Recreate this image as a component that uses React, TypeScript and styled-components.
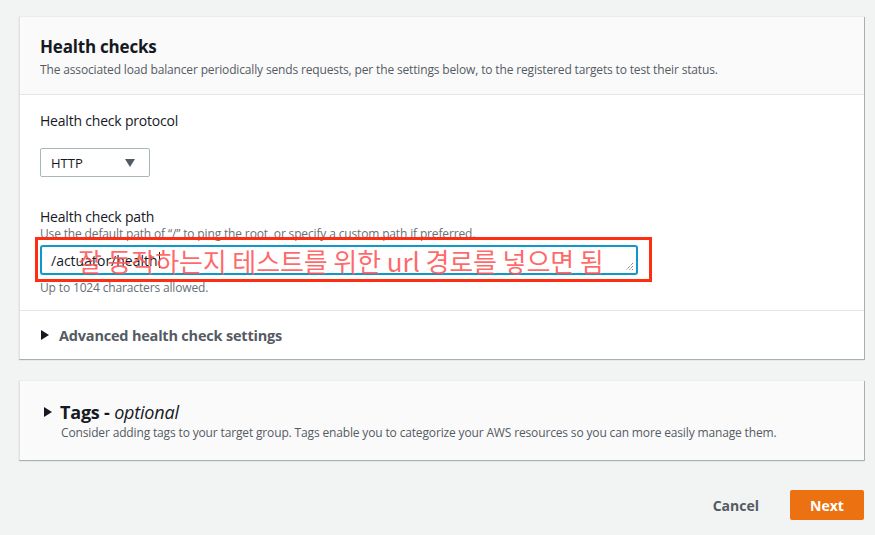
import React from "react";
import styled, { createGlobalStyle } from "styled-components";

const Global = createGlobalStyle`
  html, body { margin: 0; padding: 0; }
  body {
    background: #f2f3f3;
    font-family: "Open Sans", "Noto Sans", sans-serif;
    color: #16191f;
    width: 875px;
    height: 535px;
    overflow: hidden;
  }
`;

const Page = styled.div`
  padding: 16px 11px 0 19px;
  display: flex;
  flex-direction: column;
`;

const Card = styled.section<{ $tinted?: boolean }>`
  background: ${(p) => (p.$tinted ? "#fafafa" : "#ffffff")};
  border-top: 1px solid #eaeded;
  border-left: 1px solid #e1e4e4;
  box-shadow: 1px 1px 0 0 #a9b0b4, 0 1px 1px 0 rgba(0, 28, 36, 0.25);
  display: flex;
  flex-direction: column;
`;

const CardHeader = styled.header`
  background: #fafafa;
  border-bottom: 1px solid #e4e7e7;
  padding: 19px 20px 0;
  height: 78px;
  box-sizing: border-box;
`;

const Title = styled.h2`
  margin: 0;
  font-size: 17px;
  line-height: 22px;
  font-weight: 700;
  color: #16191f;
  letter-spacing: -0.2px;
`;

const Desc = styled.p`
  margin: 4px 0 0;
  font-size: 12px;
  line-height: 16px;
  color: #545b64;
  letter-spacing: -0.15px;
`;

const CardBody = styled.div`
  padding: 16px 20px 0;
  display: flex;
  flex-direction: column;
`;

const Field = styled.div<{ $mt?: number }>`
  display: flex;
  flex-direction: column;
  margin-top: ${(p) => p.$mt ?? 0}px;
`;

const Label = styled.label`
  font-size: 14px;
  line-height: 20px;
  color: #16191f;
  letter-spacing: -0.2px;
`;

const Hint = styled.div<{ $mt?: number }>`
  font-size: 12px;
  line-height: 14px;
  color: #687078;
  margin-top: ${(p) => p.$mt ?? 0}px;
  letter-spacing: -0.15px;
`;

const Select = styled.div`
  margin-top: 17px;
  width: 110px;
  height: 29px;
  box-sizing: border-box;
  border: 1px solid #aab7b8;
  border-radius: 2px;
  display: flex;
  align-items: center;
  justify-content: space-between;
  padding: 0 14px 0 10px;
  font-size: 13px;
  color: #16191f;
  background: #fff;
`;

const Caret = styled.span`
  width: 0;
  height: 0;
  border-left: 5.5px solid transparent;
  border-right: 5.5px solid transparent;
  border-top: 8px solid #545b64;
`;

const InputWrap = styled.div`
  position: relative;
  margin-top: 4px;
  width: 598px;
`;

const TextInput = styled.div`
  height: 30px;
  box-sizing: border-box;
  border: 2px solid #0f99c9;
  border-radius: 3px;
  padding: 0 9px;
  display: flex;
  align-items: center;
  font-size: 14px;
  color: #16191f;
  position: relative;
`;

const Cursor = styled.span`
  display: inline-block;
  width: 1px;
  height: 16px;
  background: #16191f;
  margin-left: 1px;
`;

const Grip = styled.svg`
  position: absolute;
  right: 2px;
  bottom: 2px;
`;

const Highlight = styled.div`
  position: absolute;
  left: -5px;
  top: -8px;
  width: 617px;
  height: 45px;
  box-sizing: border-box;
  border: 3px solid #ff2d12;
  pointer-events: none;
`;

const Annotation = styled.div`
  position: absolute;
  left: 38px;
  top: 0;
  height: 30px;
  display: flex;
  align-items: center;
  font-family: "Noto Sans CJK KR", "Noto Sans", sans-serif;
  font-size: 26px;
  font-weight: 400;
  letter-spacing: -0.1px;
  color: rgba(255, 84, 84, 0.88);
  white-space: nowrap;
  pointer-events: none;
`;

const Divider = styled.hr<{ $mt: number }>`
  border: 0;
  border-top: 1px solid #e4e7e7;
  margin: ${(p) => p.$mt}px -20px 0;
`;

const Expander = styled.div<{ $size: number; $gap: number }>`
  display: flex;
  align-items: center;
  gap: ${(p) => p.$gap}px;
  font-size: ${(p) => p.$size}px;
  font-weight: 700;
  color: #16191f;
  letter-spacing: -0.2px;
`;

const Tri = styled.span`
  width: 0;
  height: 0;
  border-top: 5px solid transparent;
  border-bottom: 5px solid transparent;
  border-left: 8px solid #16191f;
`;

const AdvancedRow = styled.div`
  height: 48px;
  display: flex;
  align-items: center;
  padding-left: 1px;
`;

const Muted = styled.span`
  color: #545b64;
`;

const TagsCard = styled(Card)`
  margin-top: 21px;
  height: 80px;
  box-sizing: border-box;
  padding: 19px 20px 0 24px;
`;

const Italic = styled.em`
  font-weight: 400;
  font-style: italic;
`;

const TagsDesc = styled(Desc)`
  margin: 1px 0 0 17px;
`;

const Actions = styled.div`
  margin-top: 30px;
  display: flex;
  justify-content: flex-end;
  align-items: center;
  gap: 31px;
`;

const LinkButton = styled.button`
  background: none;
  border: 0;
  padding: 0;
  font-family: inherit;
  font-size: 14px;
  font-weight: 700;
  color: #545b64;
`;

const PrimaryButton = styled.button`
  width: 74px;
  height: 30px;
  background: #ec7211;
  border: 0;
  border-radius: 2px;
  color: #fff;
  font-family: inherit;
  font-size: 14px;
  font-weight: 700;
`;

export default function App() {
  return (
    <>
      <Global />
      <Page>
        <Card>
          <CardHeader>
            <Title>Health checks</Title>
            <Desc>
              The associated load balancer periodically sends requests, per the settings below, to the
              registered targets to test their status.
            </Desc>
          </CardHeader>
          <CardBody>
            <Field>
              <Label>Health check protocol</Label>
              <Select>
                <span>HTTP</span>
                <Caret />
              </Select>
            </Field>
            <Field $mt={30}>
              <Label>Health check path</Label>
              <Hint>Use the default path of “/” to ping the root, or specify a custom path if preferred.</Hint>
              <InputWrap>
                <TextInput>
                  <span>/actuator/health</span>
                  <Cursor />
                  <Grip width="9" height="9" viewBox="0 0 9 9">
                    <path d="M8 1 L1 8 M8 4 L4 8 M8 7 L7 8" stroke="#555" strokeWidth="1" strokeDasharray="1 1" />
                  </Grip>
                </TextInput>
                <Highlight />
                <Annotation>잘 동작하는지 테스트를 위한 url 경로를 넣으면 됨</Annotation>
              </InputWrap>
              <Hint $mt={6}>Up to 1024 characters allowed.</Hint>
            </Field>
            <Divider $mt={15} />
            <AdvancedRow>
              <Expander $size={14.5} $gap={10}>
                <Tri />
                <Muted>Advanced health check settings</Muted>
              </Expander>
            </AdvancedRow>
          </CardBody>
        </Card>
        <TagsCard $tinted>
          <Expander $size={18} $gap={8}>
            <Tri />
            <span>
              Tags - <Italic>optional</Italic>
            </span>
          </Expander>
          <TagsDesc>
            Consider adding tags to your target group. Tags enable you to categorize your AWS resources so you can
            more easily manage them.
          </TagsDesc>
        </TagsCard>
        <Actions>
          <LinkButton>Cancel</LinkButton>
          <PrimaryButton>Next</PrimaryButton>
        </Actions>
      </Page>
    </>
  );
}
